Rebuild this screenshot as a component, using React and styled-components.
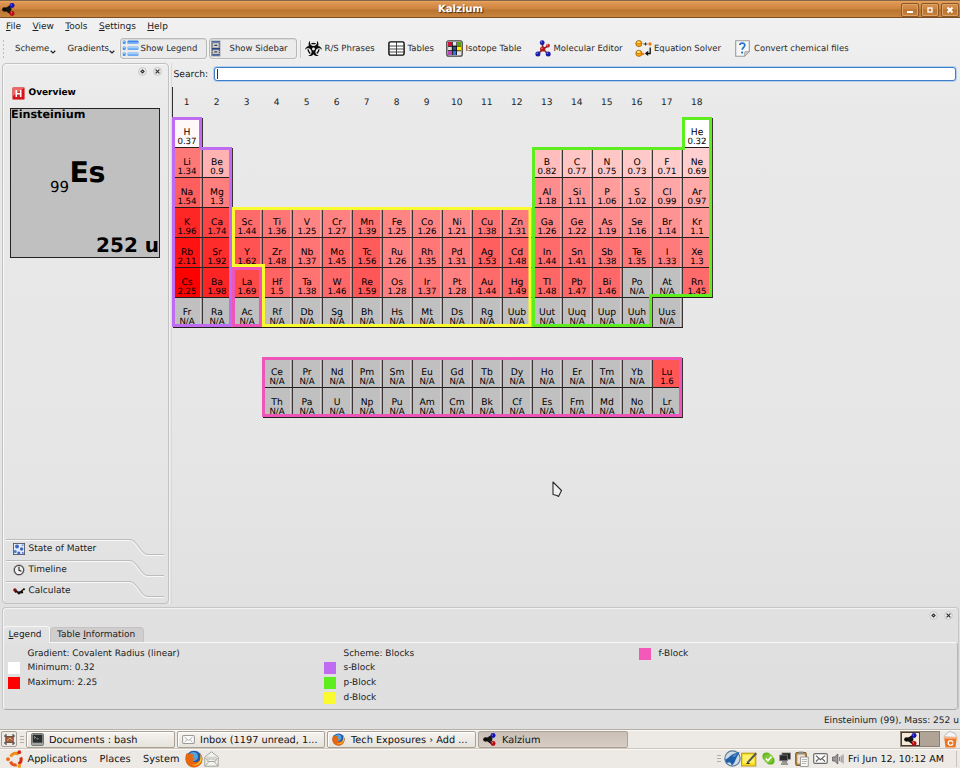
import React from 'react';
import styled, { createGlobalStyle } from 'styled-components';
import { FaBiohazard } from 'react-icons/fa';

const Global = createGlobalStyle`
  * { box-sizing: border-box; }
  html, body { margin: 0; padding: 0; overflow: hidden; }
  body {
    font-family: "DejaVu Sans", sans-serif;
    font-size: 9px;
    color: #1c1c1c;
    text-rendering: geometricPrecision;
    cursor: default;
  }
  svg { display: block; flex: none; }
`;

const Screen = styled.div`
  width: 960px;
  height: 768px;
  display: flex;
  flex-direction: column;
  overflow: hidden;
  white-space: nowrap;
  background: linear-gradient(#f1f1f1 18px, #e9e9e9 110px, #e7e7e7 400px, #e0e0e0 640px, #dfdfdf);
`;

/* ---------- title bar ---------- */
const TitleBar = styled.div`
  position: relative;
  height: 18px;
  flex: none;
  display: flex;
  align-items: center;
  padding: 0 1px 0 2px;
  border-top: 1px solid #85664a;
  border-bottom: 1px solid #7d4d1f;
  background: linear-gradient(#eaa660 0, #dc9550 2px, #cd8440 8px, #b9742f 9px, #c9853f 16px);
`;
const TitleText = styled.div`
  flex: 1;
  text-align: center;
  font-weight: bold;
  font-size: 10.1px;
  line-height: 15px;
  color: #fff;
  text-shadow: 1px 1px 1px #4a2b0d;
  padding-left: 5px;
`;
const WinButtons = styled.div`
  display: flex;
  gap: 2px;
  padding-top: 1px;
`;
const WinButton = styled.div`
  width: 18px;
  height: 14px;
  border: 1px solid #8a5726;
  border-radius: 2px;
  box-shadow: inset 0 0 0 1px #dca468;
  display: flex;
  align-items: center;
  justify-content: center;
`;

/* ---------- menu and tool bars ---------- */
const MenuBar = styled.div`
  height: 18px;
  flex: none;
  display: flex;
  align-items: center;
  padding-left: 6px;
  gap: 11.4px;
  font-size: 9.02px;
  line-height: 16px;
  u { text-underline-offset: 1px; }
`;
const ToolBar = styled.div`
  height: 27px;
  flex: none;
  display: flex;
  align-items: center;
  font-size: 8.5px;
  color: #2c2c2c;
  padding-bottom: 2px;
`;
const Grip = styled.div`
  width: 3px;
  height: 20px;
  margin: 0 10px 0 2px;
  background: radial-gradient(circle, #bdbdbd 0.8px, transparent 1px) 0 0 / 3px 4px;
`;
const ToolItem = styled.div`
  height: 21px;
  width: ${(p) => p.$w}px;
  display: flex;
  align-items: center;
  gap: ${(p) => p.$gap ?? 2.5}px;
  span { padding-top: ${(p) => p.$drop ?? 1}px; }
`;
const ToolToggle = styled(ToolItem)`
  border: 1px solid #b8b8b8;
  border-radius: 3px;
  background: #ebebeb;
  box-shadow: inset 0 1px 0 #dcdcdc, 0 0 0 1px #f3f3f3;
  padding-left: 1px;
  margin-right: ${(p) => p.$mr}px;
`;
const Divider = styled.div`
  width: 1px;
  height: 18px;
  background: #c9c9c9;
  margin-right: 4px;
`;

/* ---------- middle part ---------- */
const Middle = styled.div`
  height: 543px;
  flex: none;
  display: flex;
`;
const Sidebar = styled.div`
  width: 167px;
  height: 541px;
  margin-left: 2px;
  border: 1px solid #c2c2c2;
  border-radius: 4px;
  box-shadow: inset 1px 1px 0 #f7f7f7;
  display: flex;
  flex-direction: column;
`;
const DockButtons = styled.div`
  display: flex;
  justify-content: flex-end;
  gap: 6px;
  height: ${(p) => p.$h}px;
  flex: none;
  padding: 3px ${(p) => p.$right}px 0 0;
`;
const SideTitle = styled.div`
  display: flex;
  align-items: center;
  gap: 3.5px;
  height: 17px;
  flex: none;
  padding: 1px 0 0 9px;
  font-weight: bold;
  font-size: 9px;
  color: #000;
`;
const SideBody = styled.div`
  height: 438px;
  flex: none;
  padding: 7px 0 0 7px;
`;
const ElementCard = styled.div`
  width: 150px;
  height: 150px;
  border: 1px solid #222;
  background: #c0c0c0;
  color: #000;
  display: flex;
  flex-direction: column;
  justify-content: space-between;
`;
const CardName = styled.div`
  font-weight: bold;
  font-size: 11.2px;
  line-height: 12px;
`;
const CardSymbol = styled.div`
  display: flex;
  align-items: flex-end;
  padding: 2px 0 0 39px;
`;
const AtomicNumber = styled.span`
  font-size: 15px;
  line-height: 18px;
  padding: 0 0.5px 1px 0;
`;
const Symbol = styled.span`
  font-weight: bold;
  font-size: 28.5px;
  line-height: 28px;
  padding-bottom: 10px;
  letter-spacing: -0.5px;
`;
const CardMass = styled.div`
  text-align: right;
  font-weight: bold;
  font-size: 20px;
  line-height: 24px;
`;
const SideTab = styled.div`
  position: relative;
  height: 21px;
  flex: none;
  margin-left: 3px;
  padding: 0 0 2px 6.5px;
  display: flex;
  align-items: center;
  gap: 4px;
  font-size: 9px;
`;
const TabEdge = styled.svg`
  position: absolute;
  left: 0;
  top: 0;
`;
const Splitter = styled.div`
  width: 3px;
  height: 541px;
  border-left: 1px solid #f2f2f2;
  border-right: 1px solid #dadada;
`;
const Workspace = styled.div`
  position: relative;
  flex: 1;
`;
const SearchRow = styled.div`
  height: 22px;
  display: flex;
  align-items: center;
  padding: 0 4px 0 1.5px;
  font-size: 9.2px;
`;
const SearchLabel = styled.span`
  width: 40.5px;
  padding-top: 1px;
`;
const SearchField = styled.div`
  flex: 1;
  height: 14px;
  border: 1px solid #3f7fc9;
  border-radius: 3px;
  background: #fff;
  box-shadow: 0 0 0 1px #b4cfee;
  padding: 1px 2px;
`;
const Caret = styled.div`
  width: 1px;
  height: 10px;
  background: #333;
`;
const TableFrame = styled.div`
  position: relative;
  margin-top: 2px;
  width: 541px;
`;
const ColumnNumbers = styled.div`
  display: grid;
  grid-template-columns: repeat(18, 30px);
  height: 31px;
  line-height: 31px;
  text-align: center;
  font-size: 9.1px;
  border-left: 1px solid #333;
  span { margin-left: -2.500px; padding-top: 1px; }
`;
const ElementGrid = styled.div`
  display: grid;
  padding-left: 1px;
  grid-template-columns: repeat(18, 30px);
  grid-template-rows: repeat(10, 30px);
`;
const Cell = styled.div`
  grid-column: ${(p) => p.$col};
  grid-row: ${(p) => p.$row};
  background: ${(p) => p.$bg};
  border-right: 1px solid #3c3434;
  border-bottom: 1px solid #221c1c;
  box-shadow: inset -1px 0 0 rgba(70, 60, 60, 0.28), inset -2px 0 0 rgba(255, 255, 255, 0.3);
  color: #000;
  text-align: center;
  padding: 10px 1px 0 0;
`;
const CellSymbol = styled.div`
  font-size: 9.2px;
  line-height: 10px;
`;
const CellValue = styled.div`
  font-size: 8.6px;
  line-height: 8px;
`;
const Outlines = styled.svg`
  position: absolute;
  left: 0;
  top: 0;
`;
const Pointer = styled.svg`
  position: absolute;
  left: 380px;
  top: 418px;
`;

/* ---------- legend dock ---------- */
const Dock = styled.div`
  height: 103px;
  flex: none;
  margin: 1px 1px 0 2px;
  border: 1px solid #c6c6c6;
  border-bottom: none;
  border-radius: 4px;
  box-shadow: inset 1px 1px 0 #f3f3f3;
  display: flex;
  flex-direction: column;
`;
const TabRow = styled.div`
  display: flex;
  align-items: flex-end;
  height: 15px;
  flex: none;
  font-size: 9px;
`;
const Tab = styled.div`
  height: ${(p) => (p.$active ? 17 : 15)}px;
  width: ${(p) => p.$w}px;
  line-height: ${(p) => (p.$active ? 16 : 15)}px;
  margin-bottom: ${(p) => (p.$active ? -1 : 0)}px;
  padding-left: ${(p) => (p.$active ? 4.5 : 6)}px;
  background: ${(p) => (p.$active ? '#e2e2e2' : '#d0cdce')};
  border: 1px solid ${(p) => (p.$active ? '#f6f6f6' : '#c4c2c2')};
  border-bottom: none;
  border-radius: 4px 4px 0 0;
  z-index: ${(p) => (p.$active ? 1 : 0)};
`;
const LegendBody = styled.div`
  flex: 1;
  border: 1px solid #f8f8f8;
  border-bottom: 1px solid #a9a9a9;
  border-right-color: #b9b9b9;
  border-radius: 0 4px 4px 4px;
  padding: 3px 0 0 4px;
  display: grid;
  grid-auto-flow: column;
  grid-template-columns: 316px 315px 1fr;
  grid-template-rows: repeat(4, 14.8px);
`;
const LegendItem = styled.div`
  display: flex;
  align-items: center;
  gap: 7.5px;
  height: 15px;
  font-size: 8.95px;
`;
const Swatch = styled.i`
  width: 12px;
  height: 12px;
  background: ${(p) => p.$c || 'transparent'};
`;
const StatusBar = styled.div`
  height: 19px;
  flex: none;
  text-align: right;
  padding: 1px 1px 0 0;
  line-height: 21px;
  font-size: 9.07px;
`;

/* ---------- desktop panels ---------- */
const Panel = styled.div`
  height: ${(p) => p.$h}px;
  flex: none;
  display: flex;
  align-items: center;
  background: #edeae5;
  border-top: 1px solid ${(p) => p.$edge};
  box-shadow: inset 0 1px 0 #faf9f6;
  font-size: 9.75px;
  color: #111;
`;
const TaskButton = styled.div`
  width: ${(p) => p.$w}px;
  height: 17px;
  margin-right: 2px;
  border: 1px solid #aaa298;
  border-radius: 2px;
  background: ${(p) => (p.$active ? 'linear-gradient(#cbc0b6, #d8cdc4)' : 'linear-gradient(#f6f4f1, #e6e2dc)')};
  box-shadow: ${(p) => (p.$active ? 'none' : 'inset 1px 1px 0 #fff')};
  display: flex;
  align-items: center;
  padding-left: 4px;
  gap: ${(p) => p.$gap}px;
  span { padding-top: 2px; }
`;
const ShowDesktop = styled.div`
  width: 16px;
  height: 16px;
  margin: 0 3px 0 1px;
  border: 1px solid #a69e94;
  border-radius: 2px;
  display: flex;
  align-items: center;
  justify-content: center;
`;
const PanelGrip = styled.div`
  width: 4px;
  height: 7px;
  margin-right: ${(p) => p.$mr}px;
  background: repeating-linear-gradient(#b5aea5 0 1px, transparent 1px 3px);
`;
const Spacer = styled.div`
  flex: 1;
`;
const Workspaces = styled.div`
  display: flex;
  width: 40px;
  height: 16px;
  margin-right: 3px;
  border: 1px solid #8b8177;
  background: #b0a497;
`;
const ActiveWorkspace = styled.div`
  width: 19px;
  border: 1px solid #4c3a2c;
  background: #f3ead9;
  display: flex;
  align-items: center;
  justify-content: center;
`;
const TrashSlot = styled.div`
  margin-right: 2px;
`;
const Distributor = styled.div`
  padding-left: 6px;
`;
const PanelMenu = styled.div`
  display: flex;
  gap: 12.5px;
  margin: 1px 6px 0 3.5px;
`;
const Tray = styled.div`
  display: flex;
  align-items: center;
  gap: ${(p) => p.$gap}px;
`;
const Clock = styled.div`
  font-size: 9.55px;
  margin: 1px 12px 0 4px;
`;
const EndGrip = styled.div`
  width: 4px;
  height: 16px;
  border-left: 1px solid #c9c2b9;
`;

/* ---------- icons ---------- */
const KalziumIcon = ({ size = 12 }) => (
  <svg width={size} height={size} viewBox="0 0 12 12">
    <path d="M3 6 8.5 2.2M3 6l5.5 4M3 6h5" stroke="#111" strokeWidth="1.7" />
    <ellipse cx="2.5" cy="6" rx="2.4" ry="2" fill="#0b0b0b" />
    <circle cx="6.3" cy="5.6" r="2.4" fill="#161616" />
    <circle cx="9.3" cy="2.4" r="2.3" fill="#1414b4" />
    <circle cx="9.3" cy="9.6" r="2.3" fill="#b80c16" />
    <circle cx="8.6" cy="1.8" r=".7" fill="#6a6aff" />
    <circle cx="8.7" cy="9" r=".7" fill="#ff6a6a" />
  </svg>
);
const LegendIcon = () => (
  <svg width="17" height="17" viewBox="0 0 17 17">
    {[0.5, 6.5, 12.5].map((y) => (
      <g key={y}>
        <rect x=".7" y={y} width="3" height="3.4" rx="1" fill="#4d94ee" />
        <rect x="1.3" y={y + 0.5} width="1.4" height="1" fill="#b9dcff" />
        <rect x="5.5" y={y} width="11" height="3.6" rx="1" fill={y < 1 ? '#3b86ea' : '#6caaf2'} />
        <rect x="6" y={y + (y < 1 ? 2 : 0.6)} width="10" height="1.1" fill="#a9d2fc" />
      </g>
    ))}
  </svg>
);
const SidebarIcon = () => (
  <svg width="10" height="17" viewBox="0 0 10 17">
    <rect x="0" y=".5" width="9.5" height="16" fill="#a6a6a6" />
    <path d="M1.2 1v15M8.4 1v15" stroke="#444" strokeWidth=".8" strokeDasharray="1.2 1" />
    <rect x="1.5" y="1" width="6.6" height="1.6" fill="#4a69a8" />
    <rect x="2.2" y="3.4" width="5.2" height="3.8" fill="#d3dae8" />
    <rect x="1" y="8" width="8" height="1.6" fill="#24457f" />
    <rect x="2.2" y="10.2" width="5.2" height="3.4" fill="#d3dae8" />
    <rect x="1.5" y="14.2" width="6.6" height="1.5" fill="#35589a" />
    <path d="M3.3 5.3h3M3.3 11.9h3" stroke="#111" />
  </svg>
);
const TablesIcon = () => (
  <svg width="17" height="15" viewBox="0 0 17 15">
    <rect x=".9" y=".9" width="15.2" height="13.2" rx="1.5" fill="#fff" stroke="#0a0a0a" strokeWidth="1.4" />
    <path d="M1 5h15M1 8h15M1 11h15M8.5 1v13" stroke="#333" strokeWidth=".9" />
  </svg>
);
const IsotopeIcon = () => (
  <svg width="17" height="17" viewBox="0 0 17 17">
    <rect x=".7" y=".7" width="15.6" height="15.6" rx="2" fill="#b4b4b4" stroke="#444" strokeWidth="1.1" />
    <rect x="2" y="2" width="13" height="13" fill="#151515" />
    <rect x="2" y="2" width="4" height="4" fill="#d0103a" />
    <rect x="6.8" y="2" width="3.6" height="3.6" fill="#e8e8e8" />
    <rect x="11" y="2" width="4" height="4" fill="#55a012" />
    <rect x="2" y="6.8" width="3.8" height="3.4" fill="#dedede" />
    <rect x="6.8" y="6.8" width="3.4" height="3.4" fill="#34507a" />
    <rect x="11" y="6.6" width="4" height="3.8" fill="#ffef00" />
    <rect x="2" y="11" width="4" height="4" fill="#b84ab8" />
    <rect x="6.8" y="11" width="3.4" height="4" fill="#3d6ed0" />
    <rect x="11" y="11.2" width="4" height="3.8" fill="#e6e6e6" />
  </svg>
);
const MoleculeIcon = () => (
  <svg width="16" height="17" viewBox="0 0 16 17">
    <path d="M8 9 7.2 3M8 9l5-3M8 9l-5 5M8 9l5 5" stroke="#6d3434" strokeWidth="1.6" />
    <circle cx="7.2" cy="2.7" r="2.4" fill="#1a1aa8" />
    <circle cx="13" cy="5.6" r="1.9" fill="#c81a24" />
    <circle cx="7.7" cy="9" r="2.6" fill="#b5121c" />
    <circle cx="2.9" cy="14" r="2.5" fill="#1a1aa8" />
    <circle cx="13.2" cy="14" r="2.5" fill="#1a1aa8" />
    <circle cx="6.5" cy="2" r=".8" fill="#8080ff" />
    <circle cx="2.2" cy="13.3" r=".8" fill="#8080ff" />
    <circle cx="12.5" cy="13.3" r=".8" fill="#8080ff" />
    <circle cx="12.4" cy="5" r=".7" fill="#ff9a9a" />
    <circle cx="7" cy="8.2" r=".8" fill="#ff7f7f" />
  </svg>
);
const EquationIcon = () => (
  <svg width="17" height="17" viewBox="0 0 17 17">
    {[3.6, 13.3].map((y) => (
      <g key={y}>
        <circle cx="3.9" cy={y} r="3.1" fill="#ffa408" stroke="#8a5a14" strokeWidth=".7" />
        <path d={`M1 ${y}h6`} stroke="#c26c00" strokeWidth=".6" />
        <ellipse cx="3.6" cy={y - 1.3} rx="1.7" ry=".9" fill="#ffe48a" />
      </g>
    ))}
    <circle cx="15" cy="4" r="1.7" fill="#f07a10" />
    <circle cx="8" cy="14" r="1.3" fill="#f07a10" />
    <path d="M8.5 4h4M10.5 2.5v3" stroke="#333" strokeWidth="1" />
    <path d="M15.2 7.5v6H12" stroke="#111" strokeWidth="1.3" fill="none" />
    <path d="M13.2 10.8v5.2L9.8 13.4z" fill="#111" />
  </svg>
);
const ConvertIcon = () => (
  <svg width="15" height="17" viewBox="0 0 15 17">
    <path d="M.7 .7h13.6v10.6l-5 5H.7z" fill="#f7f7f7" stroke="#9b9b9b" strokeWidth="1.1" />
    <path d="M14.3 11.3l-5 5 .5-4.5z" fill="#cfcfcf" stroke="#9b9b9b" strokeWidth=".7" />
    <path d="M4.8 5C5 2.4 9.9 2.3 9.8 5.2 9.7 7.2 7.3 7.4 7.2 9.8" fill="none" stroke="#2172c8" strokeWidth="1.7" />
    <circle cx="7.1" cy="12.6" r="1.1" fill="#2172c8" />
  </svg>
);
const Chevron = () => (
  <svg width="6" height="12" viewBox="0 0 6 12">
    <path d="M.7 7.8 3 10l2.3-2.2" fill="none" stroke="#222" strokeWidth="1.2" />
  </svg>
);
const RoundButton = ({ kind }) => (
  <svg width="9" height="9" viewBox="0 0 9 9">
    <circle cx="4.5" cy="4.5" r="3.9" fill="#ececec" stroke="#c2c2c2" strokeWidth=".9" />
    {kind === 'close' ? (
      <path d="M2.6 2.6l3.8 3.8M6.4 2.6 2.6 6.4" stroke="#333" strokeWidth="1.2" />
    ) : (
      <path d="M4.5 3 6 4.5l-1.500 1.500-1.500-1.500z" fill="none" stroke="#333" strokeWidth="1.2" />
    )}
  </svg>
);
const OverviewIcon = () => (
  <svg width="13" height="13" viewBox="0 0 13 13">
    <rect x=".5" y=".5" width="12" height="12" rx="1" fill="#d8141c" stroke="#d87272" />
    <path d="M1 1h11L1 9z" fill="#ef6666" />
    <path d="M4.3 3v7M8.7 3v7M4.3 6.7h4.4" stroke="#fff" strokeWidth="1.6" />
  </svg>
);
const MatterIcon = () => (
  <svg width="12" height="12" viewBox="0 0 12 12">
    <rect x=".4" y=".4" width="11.2" height="11.2" fill="#e4ecfa" stroke="#4a4f5c" strokeWidth=".9" />
    <circle cx="4" cy="3.6" r="2" fill="#3c68c0" />
    <circle cx="8.6" cy="6" r="1.7" fill="#3c68c0" />
    <circle cx="2.2" cy="8.4" r="1.5" fill="#4d7ad0" />
    <circle cx="5.8" cy="10" r="1.6" fill="#3c68c0" />
    <circle cx="9.6" cy="2.2" r="1" fill="#6f95dc" />
    <circle cx="9.8" cy="10" r="1" fill="#4d7ad0" />
  </svg>
);
const TimelineIcon = () => (
  <svg width="12" height="12" viewBox="0 0 12 12">
    <circle cx="6" cy="6" r="4.7" fill="#f1f1f1" stroke="#4b4b4b" strokeWidth="1.2" />
    <circle cx="6" cy="6" r="5.5" fill="none" stroke="#888" strokeWidth=".6" strokeDasharray="1 1" />
    <path d="M6 2.8V6.3l2.5 1" fill="none" stroke="#222" strokeWidth="1.1" />
  </svg>
);
const CalculateIcon = () => (
  <svg width="12" height="12" viewBox="0 0 12 12">
    <path d="M2 4.5 5.5 8 8 6.5l3-2.5" fill="none" stroke="#111" strokeWidth="1.4" />
    <circle cx="1.9" cy="5" r="1.7" fill="#7a1410" />
    <circle cx="2.8" cy="6.8" r="1.1" fill="#2a0a0a" />
    <circle cx="6" cy="7.8" r="1.6" fill="#111" />
    <circle cx="8.7" cy="7.2" r="1.4" fill="#111" />
    <circle cx="11" cy="4.2" r="1" fill="#111" />
  </svg>
);
const DesktopIcon = () => (
  <svg width="11" height="11" viewBox="0 0 11 11">
    <path d="M1 1h2M1 1v2M10 1H8M10 1v2M1 10h2M1 10V8M10 10H8M10 10V8" stroke="#333" strokeWidth="1" />
    <rect x="1.8" y="2.5" width="7.4" height="6" fill="#a35f3c" stroke="#4a2c1c" strokeWidth=".7" />
    <path d="M3 6.5 6 4l2.5 2" stroke="#e2b08c" fill="none" />
  </svg>
);
const TerminalIcon = () => (
  <svg width="13" height="13" viewBox="0 0 13 13">
    <rect x=".5" y=".5" width="12" height="12" rx="1.2" fill="#a4a7a1" stroke="#777a75" />
    <rect x="1.7" y="1.7" width="9.6" height="8" fill="#2c2f30" />
    <path d="M3 3.5l1.5 1L3 5.5M5.5 5.8h2" stroke="#d8d8d8" strokeWidth=".7" fill="none" />
  </svg>
);
const MailIcon = ({ dark }) => (
  <svg width={dark ? 15 : 13} height={dark ? 11 : 9} viewBox="0 0 15 11" preserveAspectRatio="none">
    <rect x=".7" y=".7" width="13.6" height="9.6" rx="1.3" fill="#fafafa" stroke={dark ? '#6c6c6c' : '#9a9a96'} strokeWidth="1.2" />
    <path d="M3 2.7 7.5 6.7 12 2.7M3 8.5l2.6-2.6M12 8.5 9.4 5.9" fill="none" stroke={dark ? '#5c5c5c' : '#a3a39f'} strokeWidth="1.1" />
  </svg>
);
const FirefoxIcon = ({ size }) => (
  <svg width={size} height={size} viewBox="0 0 18 18">
    <circle cx="9" cy="9" r="8.3" fill="#235aa8" />
    <circle cx="8.5" cy="6.5" r="4.5" fill="#56a4de" />
    <path d="M2.2 2.6C-.5 6-.3 12.5 3.5 15.6c4 3.3 10.5 2 13-2.6 1.7-3.3 1-7.3-1.2-9.3.8 3.3.4 6.4-2.3 7.9-2.5 1.3-5.3.2-5.2-1.2.1-1 1.7-.8 2.6-1.4-1.6-.6-2.6-.7-3-2.2.9-.8 1.6-1.3 1.3-2.3-1.7-.2-2.9-.2-3.7-1.2-.9.4-1.6.6-2.1 1.5-.5-.5-.8-1.3-.7-2.2z" fill="#e8660e" />
    <path d="M15.5 4c1.7 3 1.5 7-.8 9.3-2.2 2.3-5.6 2.7-8 1.4 4 .6 7.6-1.2 8.4-4.6.4-1.8.5-4 .4-6.1z" fill="#fdd334" />
  </svg>
);
const UbuntuIcon = () => (
  <svg width="18" height="18" viewBox="0 0 18 18">
    <g fill="none" strokeWidth="3">
      <path d="M4.6 6.6A5.6 5.6 0 0 1 12.7 4.2" stroke="#f08a18" />
      <path d="M14.7 7.4A5.6 5.6 0 0 1 12.5 14.1" stroke="#d42a14" />
      <path d="M10.7 14.9A5.6 5.6 0 0 1 4.5 11.6" stroke="#e8551a" />
    </g>
    <circle cx="2" cy="9.2" r="1.9" fill="#ee6a14" />
    <circle cx="13.3" cy="2.2" r="1.9" fill="#d42a14" />
    <circle cx="13.3" cy="16" r="1.9" fill="#f49a1a" />
  </svg>
);
const OpenMailIcon = () => (
  <svg width="15" height="16" viewBox="0 0 15 16">
    <path d="M.8 6 7.5.8 14.2 6v9.2H.8z" fill="#f2f2ef" stroke="#a3a39e" />
    <path d="M3 6.3h9v4H3z" fill="#fff" stroke="#b4b4b0" strokeWidth=".7" />
    <path d="M4 8h7M1 15l4-4.5h5l4 4.5M1.5 7l3.5 3.5M13.5 7 10 10.5" fill="none" stroke="#9c9c98" strokeWidth=".9" />
  </svg>
);
const TrashIcon = () => (
  <svg width="15" height="17" viewBox="0 0 15 17">
    <path d="M2 6C1 3 4 3.5 4.5 1.8 6-.2 8.5.8 9.5 1.5c2.5 0 3 1.5 3 2.5 1 .5 1 1.5.5 2.5z" fill="#f5f5f5" stroke="#aaa" strokeWidth=".8" />
    <path d="M1.2 6.5h12.600l-1.300 10H2.500z" fill="#ee7420" />
    <path d="M.6 5.8h13.800v2H.6z" fill="#f5b184" />
    <circle cx="7.5" cy="12" r="2.3" fill="none" stroke="#fff" strokeWidth="1.3" />
    <path d="M7.5 12h3" stroke="#ee7420" strokeWidth=".9" />
  </svg>
);
const BirdIcon = () => (
  <svg width="17" height="17" viewBox="0 0 17 17">
    <circle cx="8.5" cy="8.5" r="7.7" fill="#cfdae4" stroke="#5b7c9c" strokeWidth="1.2" />
    <path d="M1.200 9.500C5 8.500 6 5 9.500 4l6-2.300c-.8 2.300-1.700 4-3 6-1 2-1.300 4-3.200 6.300L7.500 16c.2-2-.5-3.200-2-3.800L2.500 13z" fill="#1e5fa8" />
    <path d="M8 6l6-3-3.500 4z" fill="#5c96cc" />
  </svg>
);
const NoteIcon = () => (
  <svg width="17" height="16" viewBox="0 0 17 16">
    <rect x=".6" y="2.2" width="14.2" height="12.8" fill="#f7dc28" stroke="#b99a10" />
    <rect x="2" y="4" width="11" height="8" fill="#fdf06a" />
    <path d="M6.3 10.5 14.5 1.6l1.500 1.300-8.200 8.800-2.300.8z" fill="#555" />
    <path d="M5.5 12.5h3.200" stroke="#333" />
  </svg>
);
const SkypeIcon = () => (
  <svg width="13" height="13" viewBox="0 0 13 13">
    <circle cx="4.5" cy="4.5" r="4.1" fill="#63b51e" />
    <circle cx="8.5" cy="8.5" r="4.1" fill="#63b51e" />
    <circle cx="6.5" cy="6.5" r="4.6" fill="#7ec832" />
    <path d="M3.8 6.5l2.100 2.200 3.600-4.200" stroke="#fff" strokeWidth="1.7" fill="none" />
  </svg>
);
const NetworkIcon = () => (
  <svg width="12" height="13" viewBox="0 0 12 13">
    <rect x="3" y="1" width="8.3" height="6.2" fill="#1d1d1d" stroke="#777" strokeWidth=".8" />
    <rect x=".7" y="3" width="8" height="5.8" fill="#2a2a2a" stroke="#888" strokeWidth=".7" />
    <path d="M3 10h5M2 12h7" stroke="#444" strokeWidth="1.2" />
  </svg>
);
const ClipboardIcon = () => (
  <svg width="14" height="16" viewBox="0 0 14 16">
    <rect x=".7" y="1.5" width="10.6" height="13" rx="1" fill="#b48a4e" stroke="#7a5926" />
    <rect x="3.5" y=".5" width="5" height="2.6" fill="#8a8a8a" />
    <rect x="2.3" y="3.5" width="7.5" height="9" fill="#e9e3d8" />
    <path d="M5.5 6h7.8v9.500H5.500z" fill="#f6f6f4" stroke="#8b8b88" strokeWidth=".8" />
    <path d="M7 8.5h5M7 10.5h5M7 12.5h4" stroke="#aaa" strokeWidth=".8" />
  </svg>
);
const SpeakerIcon = () => (
  <svg width="12" height="12" viewBox="0 0 12 12">
    <path d="M.6 4h2L5.8 1v10L2.6 8h-2z" fill="#999" stroke="#555" strokeWidth=".8" />
    <path d="M7.5 4v4M9.2 2.8v6.4M11 1.6v8.8" stroke="#777" strokeWidth=".9" />
  </svg>
);

/* ---------- data ---------- */
const NA = 'N/A';
/* Each entry: row, first column, then "symbol value" pairs for consecutive columns. */
const ROWS = [
  [1, 1, 'H 0.37'],
  [1, 18, 'He 0.32'],
  [2, 1, 'Li 1.34,Be 0.9'],
  [2, 13, 'B 0.82,C 0.77,N 0.75,O 0.73,F 0.71,Ne 0.69'],
  [3, 1, 'Na 1.54,Mg 1.3'],
  [3, 13, 'Al 1.18,Si 1.11,P 1.06,S 1.02,Cl 0.99,Ar 0.97'],
  [4, 1, 'K 1.96,Ca 1.74,Sc 1.44,Ti 1.36,V 1.25,Cr 1.27,Mn 1.39,Fe 1.25,Co 1.26,Ni 1.21,Cu 1.38,Zn 1.31,Ga 1.26,Ge 1.22,As 1.19,Se 1.16,Br 1.14,Kr 1.1'],
  [5, 1, 'Rb 2.11,Sr 1.92,Y 1.62,Zr 1.48,Nb 1.37,Mo 1.45,Tc 1.56,Ru 1.26,Rh 1.35,Pd 1.31,Ag 1.53,Cd 1.48,In 1.44,Sn 1.41,Sb 1.38,Te 1.35,I 1.33,Xe 1.3'],
  [6, 1, 'Cs 2.25,Ba 1.98,La 1.69,Hf 1.5,Ta 1.38,W 1.46,Re 1.59,Os 1.28,Ir 1.37,Pt 1.28,Au 1.44,Hg 1.49,Tl 1.48,Pb 1.47,Bi 1.46,Po N/A,At N/A,Rn 1.45'],
  [7, 1, 'Fr,Ra,Ac,Rf,Db,Sg,Bh,Hs,Mt,Ds,Rg,Uub,Uut,Uuq,Uup,Uuh,Uus'],
  [9, 4, 'Ce,Pr,Nd,Pm,Sm,Eu,Gd,Tb,Dy,Ho,Er,Tm,Yb,Lu 1.6'],
  [10, 4, 'Th,Pa,U,Np,Pu,Am,Cm,Bk,Cf,Es,Fm,Md,No,Lr'],
];
const ELEMENTS = ROWS.flatMap(([row, col, list]) =>
  list.split(',').map((entry, i) => {
    const [symbol, value = NA] = entry.split(' ');
    return { row, col: col + i, symbol, value };
  })
);
const shade = (value) => {
  if (value === NA) return '#c0c0c0';
  const c = Math.round(255 * (1 - (parseFloat(value) - 0.32) / (2.25 - 0.32)));
  return `rgb(255, ${c}, ${c})`;
};

/* Block outlines, measured from the top left corner of the table frame. */
const BLOCKS = [
  ['#ee55b8', 'M61.5 181.5H88.5V238.5H61.5Z'],
  ['#c06cf0', 'M1.5 31.5H28.5V61.5H58.5V238.5H1.5Z'],
  ['#fafa30', 'M61.5 121.5H358V238.5H91.5V178.5H61.5Z'],
  ['#5eee20', 'M361.5 238.5V61.5H511.5V31.5H538.5V208.5H478.5V238.5Z'],
  ['#ee55b8', 'M91.5 271.5H508.5V328.5H91.5Z'],
];

const LEGEND = [
  ['', 'Gradient: Covalent Radius (linear)'],
  ['#ffffff', 'Minimum: 0.32'],
  ['#ff0000', 'Maximum: 2.25'],
  null,
  ['', 'Scheme: Blocks'],
  ['#c06cf0', 's-Block'],
  ['#5eee20', 'p-Block'],
  ['#fafa30', 'd-Block'],
  ['#f458b8', 'f-Block'],
];

const SideTabItem = ({ icon, label }) => (
  <SideTab>
    <TabEdge width="158" height="18" viewBox="0 0 158 18" fill="none">
      <path d="M0 1.5H123c7 0 11 15 18 15h17" stroke="#f8f8f8" />
      <path d="M0 .5H124c7 0 11 15 18 15h16" stroke="#bcbcbc" />
    </TabEdge>
    {icon}
    <span>{label}</span>
  </SideTab>
);

export default function App() {
  return (
    <>
      <Global />
      <Screen>
        <TitleBar>
          <KalziumIcon size={13} />
          <TitleText>Kalzium</TitleText>
          <WinButtons>
            <WinButton><svg width="8" height="8"><path d="M1 6h6" stroke="#fff" strokeWidth="2" /></svg></WinButton>
            <WinButton><svg width="8" height="8"><rect x="2" y="2" width="4" height="4" fill="none" stroke="#fff" strokeWidth="1.3" /></svg></WinButton>
            <WinButton><svg width="8" height="8"><path d="M1.5 1.5l5 5M6.5 1.5l-5 5" stroke="#fff" strokeWidth="1.9" /></svg></WinButton>
          </WinButtons>
        </TitleBar>
        <MenuBar>
          <span><u>F</u>ile</span>
          <span><u>V</u>iew</span>
          <span><u>T</u>ools</span>
          <span><u>S</u>ettings</span>
          <span><u>H</u>elp</span>
        </MenuBar>
        <ToolBar>
          <Grip />
          <ToolItem $w={52.5} $gap={0.5} $drop={0}><span>Scheme</span><Chevron /></ToolItem>
          <ToolItem $w={52} $gap={0.5} $drop={0}><span>Gradients</span><Chevron /></ToolItem>
          <ToolToggle $w={87} $mr={2} $gap={2}><LegendIcon /><span>Show Legend</span></ToolToggle>
          <ToolToggle $w={88} $mr={3} $gap={9}><SidebarIcon /><span>Show Sidebar</span></ToolToggle>
          <Divider />
          <ToolItem $w={83.5} $gap={3}><FaBiohazard size={17} color="#0c0c0c" /><span>R/S Phrases</span></ToolItem>
          <ToolItem $w={58}><TablesIcon /><span>Tables</span></ToolItem>
          <ToolItem $w={89}><IsotopeIcon /><span>Isotope Table</span></ToolItem>
          <ToolItem $w={99.5}><MoleculeIcon /><span>Molecular Editor</span></ToolItem>
          <ToolItem $w={100.5}><EquationIcon /><span>Equation Solver</span></ToolItem>
          <ToolItem $w={120} $gap={4}><ConvertIcon /><span>Convert chemical files</span></ToolItem>
        </ToolBar>

        <Middle>
          <Sidebar>
            <DockButtons $right={6} $h={20}>
              <RoundButton kind="float" />
              <RoundButton kind="close" />
            </DockButtons>
            <SideTitle><OverviewIcon />Overview</SideTitle>
            <SideBody>
              <ElementCard>
                <CardName>Einsteinium</CardName>
                <CardSymbol>
                  <AtomicNumber>99</AtomicNumber>
                  <Symbol>Es</Symbol>
                </CardSymbol>
                <CardMass>252 u</CardMass>
              </ElementCard>
            </SideBody>
            <SideTabItem icon={<MatterIcon />} label="State of Matter" />
            <SideTabItem icon={<TimelineIcon />} label="Timeline" />
            <SideTabItem icon={<CalculateIcon />} label="Calculate" />
          </Sidebar>
          <Splitter />
          <Workspace>
            <SearchRow>
              <SearchLabel>Search:</SearchLabel>
              <SearchField><Caret /></SearchField>
            </SearchRow>
            <TableFrame>
              <ColumnNumbers>
                {Array.from({ length: 18 }, (_, i) => <span key={i}>{i + 1}</span>)}
              </ColumnNumbers>
              <ElementGrid>
                {ELEMENTS.map((e) => (
                  <Cell key={e.symbol} $row={e.row} $col={e.col} $bg={shade(e.value)}>
                    <CellSymbol>{e.symbol}</CellSymbol>
                    <CellValue>{e.value}</CellValue>
                  </Cell>
                ))}
              </ElementGrid>
              <Outlines width="541" height="331" viewBox="0 0 541 331" fill="none" strokeWidth="3">
                {BLOCKS.map(([color, d]) => <path key={d} d={d} stroke={color} />)}
              </Outlines>
            </TableFrame>
            <Pointer width="11" height="17" viewBox="0 0 11 17">
              <path d="M1 1v12.5l4 1 1.500 1L9.500 9.500z" fill="#efefef" stroke="#2a2a2a" strokeWidth="1.1" strokeLinejoin="round" />
            </Pointer>
          </Workspace>
        </Middle>

        <Dock>
          <DockButtons $right={5} $h={19}>
            <RoundButton kind="float" />
            <RoundButton kind="close" />
          </DockButtons>
          <TabRow>
            <Tab $active $w={47}><u>L</u>egend</Tab>
            <Tab $w={94}>Table <u>I</u>nformation</Tab>
          </TabRow>
          <LegendBody>
            {LEGEND.map((item, i) => (
              <LegendItem key={i}>
                {item && <><Swatch $c={item[0]} />{item[1]}</>}
              </LegendItem>
            ))}
          </LegendBody>
        </Dock>
        <StatusBar>Einsteinium (99), Mass: 252 u</StatusBar>

        <Panel $h={19} $edge="#b5afa6">
          <ShowDesktop><DesktopIcon /></ShowDesktop>
          <PanelGrip $mr={2} />
          <TaskButton $w={149} $gap={5}><TerminalIcon /><span>Documents : bash</span></TaskButton>
          <TaskButton $w={148} $gap={5}><MailIcon /><span>Inbox (1197 unread, 1...</span></TaskButton>
          <TaskButton $w={149} $gap={6}><FirefoxIcon size={13} /><span>Tech Exposures › Add ...</span></TaskButton>
          <TaskButton $w={150} $gap={6} $active><KalziumIcon size={13} /><span>Kalzium</span></TaskButton>
          <Spacer />
          <Workspaces><ActiveWorkspace><KalziumIcon size={13} /></ActiveWorkspace></Workspaces>
          <TrashSlot><TrashIcon /></TrashSlot>
        </Panel>
        <Panel $h={20} $edge="#cdc7be">
          <Distributor><UbuntuIcon /></Distributor>
          <PanelMenu><span>Applications</span><span>Places</span><span>System</span></PanelMenu>
          <Tray $gap={1}><FirefoxIcon size={18} /><OpenMailIcon /></Tray>
          <Spacer />
          <PanelGrip $mr={3} />
          <Tray $gap={0}><BirdIcon /></Tray>
          <Tray $gap={4}>
            <NoteIcon />
            <SkypeIcon />
            <NetworkIcon />
            <ClipboardIcon />
            <MailIcon dark />
            <SpeakerIcon />
          </Tray>
          <Clock>Fri Jun 12, 10:12 AM</Clock>
          <EndGrip />
        </Panel>
      </Screen>
    </>
  );
}
